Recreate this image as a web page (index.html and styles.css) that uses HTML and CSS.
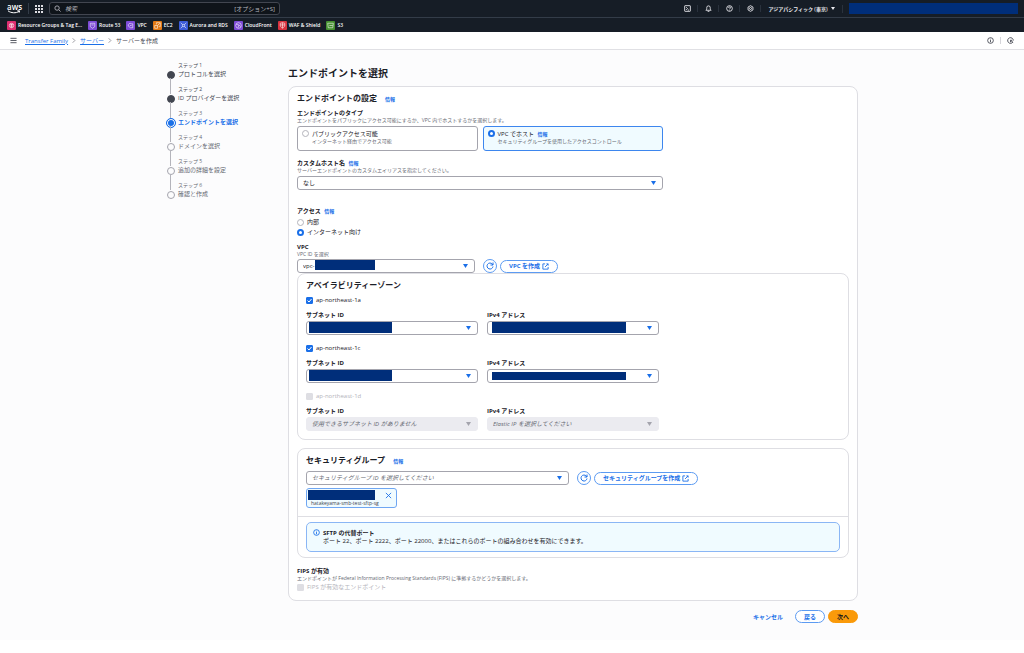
FILE: index.html
```html
<!DOCTYPE html>
<html lang="ja">
<head>
  <meta charset="UTF-8" />
  <meta name="viewport" content="width=device-width, initial-scale=1.0"/>
  <title>サーバーを作成 | Transfer Family</title>
  <link rel="stylesheet" href="styles.css">
</head>
<body>

<header class="top-nav">
  <div class="top-row">
    <a class="logo" href="#" aria-label="AWS">
      <span>aws</span>
      <svg viewBox="0 0 14 4"><path d="M1 .8 C4 3.2 9 3.4 12 1.4 M10.3 .8 L12.6 .8 L12.2 2.6"/></svg>
    </a>
    <button class="apps" aria-label="サービス">
      <svg viewBox="0 0 8 8"><path d="M0 0h2v2H0zM3 0h2v2H3zM6 0h2v2H6zM0 3h2v2H0zM3 3h2v2H3zM6 3h2v2H6zM0 6h2v2H0zM3 6h2v2H3zM6 6h2v2H6z"/></svg>
    </button>
    <label class="search">
      <svg class="line-icon" viewBox="0 0 16 16"><circle cx="7" cy="7" r="5"/><path d="M11 11l4 4"/></svg>
      <input type="search" placeholder="検索" aria-label="検索">
      <span>[オプション+S]</span>
    </label>
    <div class="tools">
      <button aria-label="CloudShell"><svg class="line-icon" viewBox="0 0 16 16"><rect x="1.5" y="1.5" width="13" height="13" rx="1"/><path d="M5 5l3 3-3 3M8.5 11.5h3"/></svg></button>
      <button aria-label="通知"><svg class="line-icon" viewBox="0 0 16 16"><path d="M2 12c2-2 2-3 2-6a4 4 0 0 1 8 0c0 3 0 4 2 6zM6 14.5h4"/></svg></button>
      <button aria-label="ヘルプ"><svg class="line-icon" viewBox="0 0 16 16"><circle cx="8" cy="8" r="6.5"/><path d="M5.8 6.5c0-3 4.5-3 4.5 0 0 1.5-2.3 1.5-2.3 3.2M8 11v1.5"/></svg></button>
      <button aria-label="設定"><svg class="line-icon" viewBox="0 0 16 16"><path d="M8 1.5l5.600 3.200v6.600L8 14.500l-5.600-3.200V4.700z"/><circle cx="8" cy="8" r="2.3"/></svg></button>
      <button class="region">アジアパシフィック (東京) <i class="caret"></i></button>
      <div class="account"></div>
    </div>
  </div>
  <nav class="favorites">
    <a href="#"><svg class="pink" viewBox="0 0 16 16"><circle cx="8" cy="8" r="4"/><path d="M5 6h6M5 9h6M8 5v7"/></svg>Resource Groups &amp; Tag E...</a>
    <a href="#"><svg class="purple" viewBox="0 0 16 16"><path d="M4 4h8v6l-4 3-4-3zM6 7h4"/></svg>Route 53</a>
    <a href="#"><svg class="purple" viewBox="0 0 16 16"><path d="M4 9c-1-4 3-6 6-4h2v7H8zM7 8h3"/></svg>VPC</a>
    <a href="#"><svg class="orange" viewBox="0 0 16 16"><path d="M3 8h5v5H3zM6 6V3h7v7h-3M8 8l4-4"/></svg>EC2</a>
    <a href="#"><svg class="blue" viewBox="0 0 16 16"><path d="M3 3l3 3M13 3l-3 3M3 13l3-3M13 13l-3-3M6 6h4v4H6z"/></svg>Aurora and RDS</a>
    <a href="#"><svg class="purple" viewBox="0 0 16 16"><circle cx="8" cy="8" r="5"/><path d="M4 6l5 1 3 3M9 7l-2 5"/></svg>CloudFront</a>
    <a href="#"><svg class="red" viewBox="0 0 16 16"><path d="M4 4l4-1 4 1v5l-4 4-4-4zM8 3v10M4 7h8"/></svg>WAF &amp; Shield</a>
    <a href="#"><svg class="green" viewBox="0 0 16 16"><path d="M3 4h10l-1 8H4zM6 8h6"/></svg>S3</a>
  </nav>
</header>

<div class="crumb-bar">
  <button class="menu" aria-label="メニュー"><svg class="line-icon" viewBox="0 0 16 16"><path d="M1 3h14M1 8h14M1 13h14"/></svg></button>
  <nav class="crumbs">
    <a href="#">Transfer Family</a>
    <svg class="line-icon" viewBox="0 0 8 16"><path d="M1 3l5 5-5 5"/></svg>
    <a href="#">サーバー</a>
    <svg class="line-icon" viewBox="0 0 8 16"><path d="M1 3l5 5-5 5"/></svg>
    <span>サーバーを作成</span>
  </nav>
  <div class="crumb-tools">
    <button aria-label="情報"><svg class="line-icon" viewBox="0 0 16 16"><circle cx="8" cy="8" r="6.5"/><path d="M8 4v1.5M8 7v5"/></svg></button>
    <button aria-label="履歴"><svg class="line-icon" viewBox="0 0 16 16"><path d="M13.5 11.5A6.5 6.5 0 1 1 14.5 8M8 7.5l6 5M8 12V7.5h4"/></svg></button>
  </div>
</div>

<div class="page">
  <div class="layout">
    <ol class="steps">
      <li class="done"><small>ステップ 1</small><a href="#">プロトコルを選択</a></li>
      <li class="done"><small>ステップ 2</small><a href="#">ID プロバイダーを選択</a></li>
      <li class="current"><small>ステップ 3</small><span>エンドポイントを選択</span></li>
      <li><small>ステップ 4</small><span>ドメインを選択</span></li>
      <li><small>ステップ 5</small><span>追加の詳細を設定</span></li>
      <li><small>ステップ 6</small><span>確認と作成</span></li>
    </ol>

    <main class="content">
      <h1>エンドポイントを選択</h1>

      <form class="card">
        <h2>エンドポイントの設定 <a class="info" href="#">情報</a></h2>

        <fieldset class="type narrow">
          <legend>エンドポイントのタイプ</legend>
          <p class="hint">エンドポイントをパブリックにアクセス可能にするか、VPC 内でホストするかを選択します。</p>
          <div class="tiles">
            <div class="tile">
              <input type="radio" name="type" id="typePublic">
              <div><label for="typePublic">パブリックアクセス可能</label><p class="hint">インターネット経由でアクセス可能</p></div>
            </div>
            <div class="tile selected">
              <input type="radio" name="type" id="typeVpc" checked>
              <div><label for="typeVpc">VPC でホスト</label> <a class="info" href="#">情報</a><p class="hint">セキュリティグループを使用したアクセスコントロール</p></div>
            </div>
          </div>
        </fieldset>

        <div class="field host narrow">
          <label for="hostname">カスタムホスト名</label> <a class="info" href="#">情報</a>
          <p class="hint">サーバーエンドポイントのカスタムエイリアスを指定してください。</p>
          <div class="select"><select id="hostname"><option>なし</option></select></div>
        </div>

        <fieldset class="access">
          <legend>アクセス <a class="info" href="#">情報</a></legend>
          <label class="choice"><input type="radio" name="access">内部</label>
          <label class="choice"><input type="radio" name="access" checked>インターネット向け</label>
        </fieldset>

        <div class="field vpc">
          <label for="vpc">VPC</label>
          <p class="hint">VPC ID を選択</p>
          <div class="control-row">
            <div class="select"><select id="vpc"><option>vpc-</option></select><span class="mask mask-vpc"></span></div>
            <button type="button" class="btn round" aria-label="更新"><svg class="line-icon" viewBox="0 0 16 16"><path d="M14 9a6 6 0 1 1-1.5-5L14 6M14 1v5H9"/></svg></button>
            <button type="button" class="btn">VPC を作成 <svg class="line-icon" viewBox="0 0 16 16"><path d="M7 2H2v12h12V9M10 2h4v4M14 2L7 9"/></svg></button>
          </div>
        </div>

        <section class="box zones">
          <h2>アベイラビリティーゾーン</h2>
          <div class="zone">
            <label class="choice"><input type="checkbox" checked>ap-northeast-1a</label>
            <div class="pair">
              <div class="field"><label for="subnetA">サブネット ID</label><div class="select"><select id="subnetA"><option></option></select><span class="mask mask-subnet"></span></div></div>
              <div class="field"><label for="ipA">IPv4 アドレス</label><div class="select"><select id="ipA"><option></option></select><span class="mask mask-ip"></span></div></div>
            </div>
          </div>
          <div class="zone">
            <label class="choice"><input type="checkbox" checked>ap-northeast-1c</label>
            <div class="pair">
              <div class="field"><label for="subnetC">サブネット ID</label><div class="select"><select id="subnetC"><option></option></select><span class="mask mask-subnet"></span></div></div>
              <div class="field"><label for="ipC">IPv4 アドレス</label><div class="select"><select id="ipC"><option></option></select><span class="mask mask-ip thin"></span></div></div>
            </div>
          </div>
          <div class="zone">
            <label class="choice off"><input type="checkbox" disabled>ap-northeast-1d</label>
            <div class="pair">
              <div class="field"><label for="subnetD">サブネット ID</label><div class="select off"><select id="subnetD" disabled><option>使用できるサブネット ID がありません</option></select></div></div>
              <div class="field"><label for="ipD">IPv4 アドレス</label><div class="select off"><select id="ipD" disabled><option>Elastic IP を選択してください</option></select></div></div>
            </div>
          </div>
        </section>

        <section class="box security">
          <div class="security-body">
            <h2><label for="group">セキュリティグループ</label> <a class="info" href="#">情報</a></h2>
            <div class="control-row">
              <div class="select placeholder"><select id="group"><option>セキュリティグループ ID を選択してください</option></select></div>
              <button type="button" class="btn round" aria-label="更新"><svg class="line-icon" viewBox="0 0 16 16"><path d="M14 9a6 6 0 1 1-1.5-5L14 6M14 1v5H9"/></svg></button>
              <button type="button" class="btn">セキュリティグループを作成 <svg class="line-icon" viewBox="0 0 16 16"><path d="M7 2H2v12h12V9M10 2h4v4M14 2L7 9"/></svg></button>
            </div>
            <div class="token">
              <span class="mask mask-token"></span>
              <p>hatakeyama-smb-test-sftp-sg</p>
              <button type="button" aria-label="削除"><svg class="line-icon" viewBox="0 0 16 16"><path d="M2 2l12 12M14 2L2 14"/></svg></button>
            </div>
          </div>
          <div class="security-foot">
            <div class="alert">
              <svg class="line-icon" viewBox="0 0 16 16"><circle cx="8" cy="8" r="6.5"/><path d="M8 4v1.5M8 7v5"/></svg>
              <div>
                <strong>SFTP の代替ポート</strong>
                <p>ポート 22、ポート 2222、ポート 22000、またはこれらのポートの組み合わせを有効にできます。</p>
              </div>
            </div>
          </div>
        </section>

        <fieldset class="fips">
          <legend>FIPS が有効</legend>
          <p class="hint">エンドポイントが Federal Information Processing Standards (FIPS) に準拠するかどうかを選択します。</p>
          <label class="choice off"><input type="checkbox" disabled>FIPS が有効なエンドポイント</label>
        </fieldset>
      </form>

      <div class="actions">
        <button class="btn link">キャンセル</button>
        <button class="btn">戻る</button>
        <button class="btn primary">次へ</button>
      </div>
    </main>
  </div>
</div>

</body>
</html>
```
FILE: styles.css
```css
* {
  box-sizing: border-box;
}

body {
  margin: 0;
  background: #fff;
  color: #1b2027;
  font-family: "Open Sans", "Noto Sans CJK JP", sans-serif;
  font-size: 6px;
  line-height: 8px;
}

h1, h2, p, ol, fieldset, legend {
  margin: 0;
  padding: 0;
  border: 0;
}

button, input, select {
  margin: 0;
  padding: 0;
  border: 0;
  background: none;
  color: inherit;
  font: inherit;
}

a {
  color: #1a6fe8;
}

svg {
  display: block;
  flex: none;
}

.line-icon {
  width: 7px;
  height: 7px;
  fill: none;
  stroke: currentColor;
  stroke-width: 2;
}

/* Top navigation */
.top-nav {
  background: #161d26;
  color: #ebebf0;
}

.top-row {
  display: flex;
  align-items: center;
  height: 18px;
  padding: 0 6px 0 7px;
  border-bottom: 1px solid #333c48;
}

.logo {
  width: 22px;
  border-right: 1px solid #333c48;
  color: #fff;
  font-size: 8px;
  font-weight: 600;
  line-height: 7px;
  text-decoration: none;
}

.logo svg {
  width: 14px;
  height: 4px;
  fill: none;
  stroke: #fff;
}

.apps {
  margin: 0 6px;
}

.apps svg {
  width: 8px;
  height: 8px;
  fill: #dedee3;
}

.search {
  display: flex;
  align-items: center;
  gap: 4px;
  width: 231px;
  height: 13px;
  padding: 0 4px;
  border: 1px solid #424650;
  border-radius: 3px;
  background: #0f141a;
  color: #b4b4bb;
}

.search input {
  flex: 1;
  min-width: 0;
  outline: 0;
}

.search input::placeholder {
  color: #b4b4bb;
  font-style: italic;
}

.tools {
  display: flex;
  align-items: center;
  margin-left: auto;
}

.tools button {
  display: flex;
  justify-content: center;
  width: 21px;
  border-right: 1px solid #2a323d;
}

.tools .region {
  align-items: center;
  gap: 3px;
  width: 82px;
  margin-right: 6px;
  font-size: 5px;
  font-weight: 600;
  white-space: nowrap;
}

.caret {
  border: 2px solid transparent;
  border-top: 3px solid currentColor;
  border-bottom: 0;
}

.account {
  width: 169px;
  height: 11px;
  background: #002e7a;
}

.favorites {
  display: flex;
  align-items: center;
  gap: 6px;
  height: 14px;
  padding-left: 7px;
}

.favorites a {
  display: flex;
  align-items: center;
  gap: 2px;
  color: #fff;
  font-size: 5px;
  font-weight: 600;
  text-decoration: none;
  white-space: nowrap;
}

.favorites svg {
  width: 9px;
  height: 9px;
  border-radius: 1px;
  fill: none;
  stroke: #fff;
}

.pink { background: #dc2d70; }
.purple { background: #7d4bd6; }
.orange { background: #e57a14; }
.blue { background: #3b5bd9; }
.red { background: #d9323f; }
.green { background: #459030; }

/* Breadcrumbs */
.crumb-bar {
  display: flex;
  align-items: center;
  height: 18px;
  padding: 0 10px;
  border-bottom: 1px solid #e0e0e4;
  color: #424650;
}

.crumbs {
  display: flex;
  align-items: center;
  gap: 4px;
  margin-left: 8px;
}

.crumbs svg {
  width: 4px;
  color: #8c8c94;
}

.crumb-tools {
  display: flex;
  margin-left: auto;
}

.crumb-tools button + button {
  margin-left: 6px;
  padding-left: 6px;
  border-left: 1px solid #d5d5da;
}

/* Wizard layout */
.page {
  padding: 11px 20px 17px;
  background: #fcfcfd;
}

.layout {
  display: flex;
  max-width: 692px;
  margin: 0 auto;
}

.steps {
  flex: none;
  width: 122px;
  list-style: none;
}

.steps li {
  position: relative;
  height: 24px;
  padding-left: 12px;
  color: #656871;
}

.steps small {
  display: block;
  font-size: 5px;
}

.steps li > a,
.steps li > span {
  display: block;
  color: inherit;
  line-height: 10px;
  text-decoration: none;
}

.steps li::before {
  content: "";
  position: absolute;
  top: 11px;
  left: 2px;
  width: 6px;
  height: 6px;
  border: 1px solid #a4a4ad;
  border-radius: 50%;
  transform: translate(-1px, -1px);
}

.steps li:not(:last-child)::after {
  content: "";
  position: absolute;
  top: 17px;
  left: 4px;
  width: 1px;
  height: 16px;
  background: #b4b4bb;
}

.steps .done {
  color: #424650;
}

.steps .done::before {
  border-color: #424650;
  background: #424650;
}

.steps .current > span {
  color: #1a6fe8;
  font-weight: 700;
}

.steps .current::before {
  top: 10px;
  left: 1px;
  width: 8px;
  height: 8px;
  border-color: #1a6fe8;
  background: #1a6fe8;
  box-shadow: inset 0 0 0 1px #fff;
}

.content {
  flex: 1;
  min-width: 0;
}

h1 {
  margin: 4px 0 5px;
  font-size: 10px;
  line-height: 16px;
}

h2 {
  font-size: 8px;
  line-height: 12px;
}

.card {
  padding: 5px 8px 8px;
  border: 1px solid #dedee3;
  border-radius: 8px;
  background: #fff;
}

.info {
  margin-left: 2px;
  font-size: 5px;
  font-weight: 700;
  text-decoration: none;
}

h2 .info {
  margin-left: 6px;
}

.hint {
  color: #656871;
  font-size: 5px;
  line-height: 6px;
}

.narrow {
  max-width: 366px;
}

legend,
.field > label {
  font-weight: 700;
}

.type {
  margin-top: 4px;
}

.tiles {
  display: flex;
  gap: 5px;
  margin-top: 3px;
}

.tile {
  display: flex;
  flex: 1;
  gap: 3px;
  height: 25px;
  padding: 3px 4px;
  border: 1px solid #a4a4ad;
  border-radius: 3px;
}

.tile.selected {
  border-color: #3d86ee;
  background: #f0fbff;
}

input[type="radio"],
input[type="checkbox"] {
  flex: none;
  width: 7px;
  height: 7px;
  border: 1px solid #b4b4bb;
  border-radius: 50%;
  background: #fff;
  appearance: none;
}

input[type="radio"]:checked {
  border: 2px solid #1a6fe8;
}

input[type="checkbox"] {
  border-radius: 1px;
}

input[type="checkbox"]:checked {
  border-color: #1a6fe8;
  background: #1a6fe8 url("data:image/svg+xml,%3Csvg xmlns='http://www.w3.org/2000/svg' viewBox='0 0 5 5'%3E%3Cpath d='M.5 2.5l1.5 1.5L4.5 1' fill='none' stroke='white'/%3E%3C/svg%3E");
}

input[type="checkbox"]:disabled {
  border-color: #dedee3;
  background: #dedee3;
}

.choice {
  display: flex;
  align-items: center;
  gap: 3px;
  height: 10px;
}

.choice.off {
  color: #b4b4bb;
}

.select {
  position: relative;
  height: 14px;
}

.select select {
  display: block;
  width: 100%;
  height: 100%;
  padding: 0 18px 0 5px;
  border: 1px solid #a4a4ad;
  border-radius: 3px;
  background: #fff;
  appearance: none;
}

.select::after {
  content: "";
  position: absolute;
  top: 5px;
  right: 7px;
  width: 5px;
  height: 4px;
  background: #1a6fe8;
  clip-path: polygon(0 0, 100% 0, 50% 100%);
}

.select.placeholder select,
.select.off select {
  color: #656871;
  font-style: italic;
}

.select.off select {
  border-color: #ebebf0;
  background: #ebebf0;
  opacity: 1;
}

.select.off::after {
  background: #a4a4ad;
}

/* Masked identifiers */
.mask {
  position: absolute;
  background: #002e7a;
}

.mask-vpc {
  top: 1px;
  left: 18px;
  width: 60px;
  height: 10px;
}

.mask-subnet {
  top: 1px;
  left: 3px;
  width: 83px;
  height: 11px;
}

.mask-ip {
  top: 1px;
  left: 5px;
  width: 134px;
  height: 11px;
}

.mask-ip.thin {
  top: 3px;
  height: 8px;
}

.mask-token {
  top: 1px;
  left: 1px;
  width: 67px;
  height: 10px;
}

.host {
  margin-top: 8px;
}

.host .select {
  margin-top: 3px;
}

.access {
  margin-top: 17px;
}

.access legend {
  padding-bottom: 2px;
}

.vpc {
  margin-top: 6px;
}

.control-row {
  display: flex;
  align-items: center;
  gap: 3px;
}

.control-row .select {
  width: 178px;
  margin-right: 5px;
}

.vpc .control-row {
  margin-top: 2px;
}

.security .control-row .select {
  width: 263px;
}

.btn {
  display: flex;
  align-items: center;
  justify-content: center;
  gap: 2px;
  height: 13px;
  padding: 0 8px;
  border: 1px solid #5c9bf2;
  border-radius: 7px;
  background: #fff;
  color: #1a6fe8;
  font-weight: 700;
  white-space: nowrap;
}

.btn.round {
  width: 14px;
  height: 14px;
  padding: 0;
}

.btn.round svg {
  width: 8px;
  height: 8px;
}

.btn.link {
  border-color: transparent;
  background: none;
}

.btn.primary {
  border-color: #fa9a0a;
  background: #fa9a0a;
  color: #0f141a;
}

.box {
  border: 1px solid #dedee3;
  border-radius: 8px;
}

.zones {
  padding: 5px 8px 8px;
}

.zone + .zone {
  margin-top: 8px;
}

.zones h2 {
  margin-bottom: 4px;
}

.pair {
  display: flex;
  gap: 9px;
  max-width: 353px;
  margin-top: 6px;
}

.pair .field {
  flex: 1;
}

.pair .select {
  margin-top: 2px;
}

.security {
  margin-top: 8px;
}

.security-body {
  padding: 5px 8px 8px;
}

.security h2 {
  margin-bottom: 4px;
}

.token {
  position: relative;
  width: 91px;
  height: 20px;
  margin-top: 3px;
  padding: 10px 4px 0;
  border: 1px solid #6fa6f2;
  border-radius: 3px;
  background: #f0fbff;
  color: #424650;
  font-size: 5px;
}

.token button {
  position: absolute;
  top: 3px;
  right: 4px;
  color: #1a6fe8;
}

.security-foot {
  padding: 5px 8px;
  border-top: 1px solid #dedee3;
}

.alert {
  display: flex;
  gap: 3px;
  padding: 6px;
  border: 1px solid #8ab6f5;
  border-radius: 5px;
  background: #f0fbff;
}

.alert > svg {
  color: #1a6fe8;
}

.alert strong {
  display: block;
}

.fips {
  margin-top: 9px;
}

.fips .choice {
  margin-top: 1px;
}

.actions {
  display: flex;
  justify-content: flex-end;
  gap: 3px;
  margin-top: 9px;
}
```
